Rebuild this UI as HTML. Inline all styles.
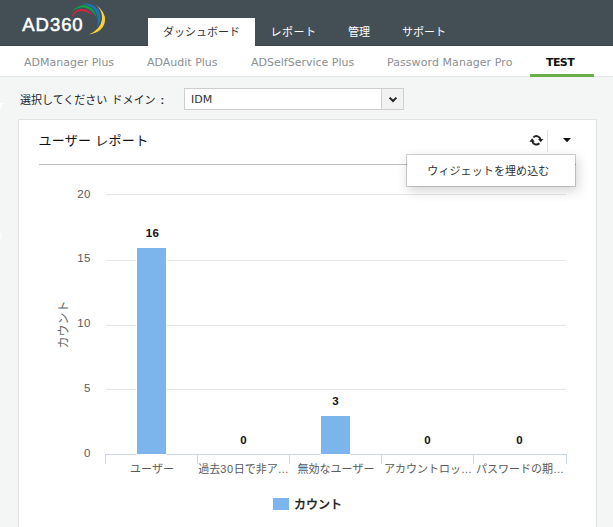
<!DOCTYPE html>
<html lang="ja">
<head>
<meta charset="utf-8">
<title>AD360</title>
<style>
html,body{margin:0;padding:0;}
body{width:613px;height:527px;overflow:hidden;background:#f4f6f6;position:relative;
  font-family:"DejaVu Sans","Noto Sans CJK JP",sans-serif;font-size:11px;color:#222;}
.abs{position:absolute;white-space:nowrap;}
#hdr{left:0;top:0;width:613px;height:46px;background:#434e55;}
#hdrline{left:0;top:45px;width:148px;height:1px;background:#3b454b;}
#hdrline2{left:255px;top:45px;width:358px;height:1px;background:#3b454b;}
#logo{left:22.3px;top:12.7px;font-family:"Liberation Sans",sans-serif;font-weight:normal;-webkit-text-stroke:0.55px #fff;font-size:18.5px;line-height:24px;color:#fff;letter-spacing:0.95px;}
#tab{left:148px;top:18px;width:107px;height:28px;background:#fff;}
.nav{top:24px;height:16px;line-height:16px;font-size:11px;color:#fff;font-family:"Liberation Sans","Noto Sans CJK JP",sans-serif;}
#subnav{left:0;top:46px;width:613px;height:30px;background:#fff;border-bottom:1px solid #e3e7e7;}
.sn{top:55px;height:16px;line-height:16px;font-size:11px;color:#8a8f94;font-family:"DejaVu Sans",sans-serif;}
#green{left:530px;top:74px;width:64px;height:3px;background:#6ab04a;}
#lbl{left:20px;top:92px;height:16px;line-height:16px;font-size:11px;color:#222;font-family:"Liberation Sans","Noto Sans CJK JP",sans-serif;}
#sel{left:184px;top:88px;width:218px;height:20px;border:1px solid #cfcfcf;background:#fff;}
#selbtn{left:381px;top:88px;width:21px;height:20px;border:1px solid #cfcfcf;background:#f2f2f2;}
#selval{left:191px;top:92px;height:16px;line-height:16px;font-size:11px;color:#333;}
#card{left:18px;top:119px;width:577px;height:420px;border:1px solid #e2e2e2;background:#fff;}
#title{left:38.4px;top:130.5px;letter-spacing:0.3px;height:20px;line-height:20px;font-size:13px;color:#111;font-family:"Liberation Sans","Noto Sans CJK JP",sans-serif;}
#tline{left:39px;top:164px;width:537px;height:1px;background:#bcc0c0;}
#vdiv{left:547px;top:130px;width:1px;height:22px;background:#e0e0e0;}
#menu{left:406px;top:154px;width:168px;height:31px;border:1px solid rgba(0,0,0,0.17);background:#fff;background-clip:padding-box;box-shadow:2px 4px 12px rgba(0,0,0,0.17);}
#menutxt{left:427.3px;top:163.3px;letter-spacing:0.1px;height:16px;line-height:16px;font-size:11px;color:#333;font-family:"Liberation Sans","Noto Sans CJK JP",sans-serif;}
svg{position:absolute;left:0;top:0;}
svg text{font-family:"Liberation Sans","Noto Sans CJK JP",sans-serif;}
</style>
</head>
<body>
<div class="abs" id="hdr"></div>
<div class="abs" id="hdrline"></div>
<div class="abs" id="hdrline2"></div>
<div class="abs" id="logo">AD360</div>
<div class="abs" id="tab"></div>
<div class="abs nav" style="left:163px;color:#333;">ダッシュボード</div>
<div class="abs nav" style="left:270.6px;letter-spacing:0.5px;">レポート</div>
<div class="abs nav" style="left:348px;">管理</div>
<div class="abs nav" style="left:402px;">サポート</div>

<div class="abs" id="subnav"></div>
<div class="abs sn" style="left:24px;">ADManager Plus</div>
<div class="abs sn" style="left:147px;">ADAudit Plus</div>
<div class="abs sn" style="left:251px;">ADSelfService Plus</div>
<div class="abs sn" style="left:387px;letter-spacing:0.07px;">Password Manager Pro</div>
<div class="abs sn" style="left:546px;color:#111;font-weight:bold;letter-spacing:-0.6px;">TEST</div>
<div class="abs" id="green"></div>

<div class="abs" id="lbl">選択してください <span style="margin-left:1px">ドメイン</span> <span style="margin-left:2px;font-weight:bold">:</span></div>
<div class="abs" id="sel"></div>
<div class="abs" id="selbtn"></div>
<div class="abs" id="selval">IDM</div>

<div class="abs" style="left:0;top:103px;width:2px;height:5px;background:#fbfcfc;"></div>
<div class="abs" style="left:2px;top:103px;width:2px;height:1px;background:#fbfcfc;"></div>
<div class="abs" style="left:0;top:233px;width:2px;height:4px;background:#fbfcfc;border-radius:0 2px 2px 0;"></div>
<div class="abs" style="left:0;top:238px;width:2px;height:1px;background:#fbfcfc;"></div>
<div class="abs" id="card"></div>
<div class="abs" id="title">ユーザー レポート</div>
<div class="abs" id="tline"></div>
<div class="abs" id="vdiv"></div>

<svg width="613" height="527" viewBox="0 0 613 527">
  <!-- logo swoosh -->
  <g id="swoosh">
    <path d="M94.8 3.8 Q106 12 105 21 Q103.5 32 88.8 34.6 Q101 29 102 19 Q102.5 10 94.8 3.8Z" fill="#fbd236"/>
    <path d="M81.5 3.4 Q93 2.5 98.5 10 Q103.5 19 96.9 27.5 Q99.5 18 95 11 Q90.5 4.5 81.5 3.4Z" fill="#1b75bb"/>
    <path d="M72.1 11.5 Q77 5 84.5 5 Q94 6 96.9 18.4 Q92 9 84 7.6 Q77 7.3 72.1 11.5Z" fill="#13a04a"/>
    <path d="M71.3 18.4 Q73 10 81.1 9 Q89 9.3 93.9 15.8 Q88 11.5 81.1 11.1 Q74.5 11.5 71.3 18.4Z" fill="#e2203a"/>
  </g>
  <!-- select chevron -->
  <path d="M389.6 97.6 L393 101 L396.4 97.6" fill="none" stroke="#222" stroke-width="2"/>
  <!-- refresh icon -->
  <g id="refresh" fill="none" stroke="#222" stroke-width="1.9">
    <path d="M533.43 137.33 A4.2 4.2 0 0 1 540.56 139.72"/>
    <path d="M539.37 143.27 A4.2 4.2 0 0 1 532.24 140.88"/>
  </g>
  <path d="M538.0 138.9 L543.4 138.9 L540.7 142.3Z" fill="#222"/>
  <path d="M529.4 141.7 L534.8 141.7 L532.1 138.3Z" fill="#222"/>
  <!-- caret -->
  <path d="M563 138 L571 138 L567 142.3Z" fill="#111"/>

  <!-- chart -->
  <g stroke="#e6e6e6" stroke-width="1" shape-rendering="crispEdges">
    <line x1="106" x2="566" y1="194.5" y2="194.5"/>
    <line x1="106" x2="566" y1="260.5" y2="260.5"/>
    <line x1="106" x2="566" y1="325.5" y2="325.5"/>
    <line x1="106" x2="566" y1="389.5" y2="389.5"/>
  </g>
  <g stroke="#ccd6eb" stroke-width="1" shape-rendering="crispEdges">
    <line x1="105" x2="567" y1="454.5" y2="454.5"/>
    <line x1="105.5" x2="105.5" y1="454" y2="464"/>
    <line x1="197.5" x2="197.5" y1="454" y2="464"/>
    <line x1="289.5" x2="289.5" y1="454" y2="464"/>
    <line x1="381.5" x2="381.5" y1="454" y2="464"/>
    <line x1="473.5" x2="473.5" y1="454" y2="464"/>
    <line x1="566.5" x2="566.5" y1="454" y2="464"/>
  </g>
  <g fill="#7cb5ec" stroke="#fff" stroke-width="1" shape-rendering="crispEdges">
    <rect x="136.5" y="247.5" width="30" height="207"/>
    <rect x="320.5" y="415.5" width="30" height="39"/>
  </g>
  <g font-size="11.5" fill="#5a5a5a" text-anchor="end" letter-spacing="0.5">
    <text x="91" y="198">20</text>
    <text x="91" y="262.4">15</text>
    <text x="91" y="327.2">10</text>
    <text x="91" y="392">5</text>
    <text x="91" y="457">0</text>
  </g>
  <g font-size="11.5" fill="#111" font-weight="bold" text-anchor="middle" letter-spacing="0.3">
    <text x="152.5" y="237">16</text>
    <text x="243.6" y="444">0</text>
    <text x="335.5" y="405">3</text>
    <text x="427.6" y="444">0</text>
    <text x="519.6" y="444">0</text>
  </g>
  <g font-size="11" fill="#5a5a5a" text-anchor="middle">
    <text x="152" y="473">ユーザー</text>
    <text x="243.5" y="473">過去<tspan letter-spacing="0.7">30</tspan>日で非ア…</text>
    <text x="336" y="473">無効なユーザー</text>
    <text x="428" y="473">アカウントロッ…</text>
    <text x="520" y="473">パスワードの期…</text>
  </g>
  <text font-size="12" fill="#666" text-anchor="middle" transform="translate(67.5,324.5) rotate(-90)">カウント</text>
  <rect x="273" y="498" width="16" height="12" fill="#7cb5ec"/>
  <text x="294" y="509" font-size="12" font-weight="500" fill="#222" stroke="#222" stroke-width="0.25">カウント</text>
</svg>

<div class="abs" id="menu"></div>
<div class="abs" id="menutxt">ウィジェットを埋め込む</div>
</body>
</html>
